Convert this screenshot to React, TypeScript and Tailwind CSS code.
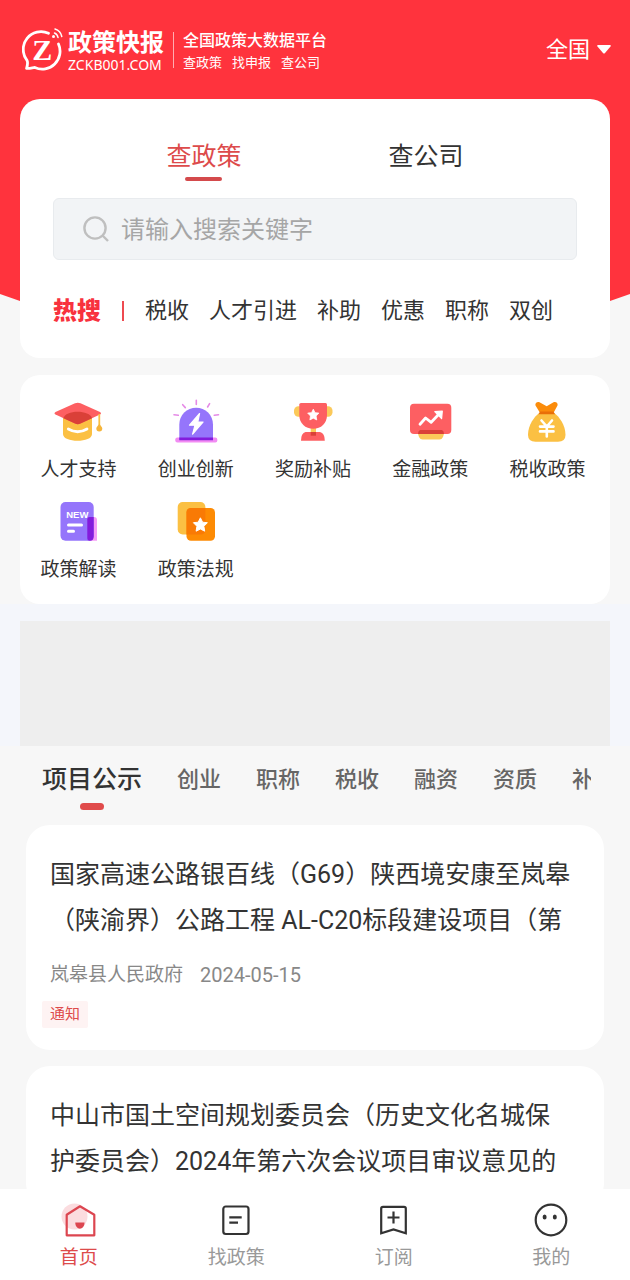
import { useState } from "react";
import type { ReactNode } from "react";

const STAR =
  "M0 -7 L2.2 -2.6 L7 -2.1 L3.5 1.5 L4.3 6.4 L0 4.2 L-4.3 6.4 L-3.5 1.5 L-7 -2.1 L-2.2 -2.6 Z";

function ServiceIcon({ children }: { children: ReactNode }) {
  return (
    <svg viewBox="0 0 50 44" className="h-11 w-[50px]" fill="none" aria-hidden="true">
      {children}
    </svg>
  );
}

const services: { label: string; icon: ReactNode }[] = [
  {
    label: "人才支持",
    icon: (
      <ServiceIcon>
        <path d="M9 16H38V35C38 39.5 31 41.8 23.5 41.8S9 39.5 9 35Z" fill="#fbc043" />
        <path d="M1.5 13 21 4.3Q23.7 3.2 26.5 4.3L46 13Q48 14.3 46 15.6L26.5 24.6Q23.7 25.8 21 24.6L1.5 15.6Q-.5 14.3 1.5 13Z" fill="#fd5f62" />
        <path d="M9.5 19.2C11 10.5 36 10.5 38 19.2L26.5 24.6Q23.7 25.8 21 24.6Z" fill="#da4038" />
        <path d="M45.3 15V28" stroke="#fbc043" strokeWidth="1.8" />
        <path d="M45.3 25c1.5 1.8 3 3.2 3 4.6a3 3 0 0 1-6 0c0-1.4 1.5-2.8 3-4.6Z" fill="#f5b53b" />
        <path d="M14.3 30Q23.7 35.5 33 30" stroke="#fff" strokeWidth="2.8" strokeLinecap="round" />
      </ServiceIcon>
    ),
  },
  {
    label: "创业创新",
    icon: (
      <ServiceIcon>
        <path d="M3 15.8 7.3 16.3M11.7 5.7 14.3 8.6M25.3 1.3V5.5M38.6 4.6 36.6 8M43.3 16.3 47.5 15.8" stroke="#e58ae6" strokeWidth="1.6" strokeLinecap="round" />
        <rect x="4.3" y="38.5" width="42" height="5" rx="2" fill="#f28cf3" />
        <path d="M8.3 40.8V25.5a16.85 16.85 0 0 1 33.7 0V40.8Z" fill="#9575fb" />
        <path d="M8.3 38.5H42V41.3H8.3Z" fill="#831bdc" />
        <path d="M28.6 14.5 18.5 26.2H24L21.6 35.2 32 23H26.8Z" fill="#fff" stroke="#fff" strokeWidth="1.2" strokeLinejoin="round" />
      </ServiceIcon>
    ),
  },
  {
    label: "奖励补贴",
    icon: (
      <ServiceIcon>
        <rect x="6" y="7.3" width="38.5" height="10.5" rx="4.5" fill="#fbc95a" />
        <path d="M22.7 29H28V36H22.7Z" fill="#fbc95a" />
        <path d="M13 4H37.5Q39 4 39 5.5V16C39 24.5 33 29.8 25.2 29.8S11.3 24.5 11.3 16V5.5Q11.3 4 13 4Z" fill="#fd5f62" />
        <path d="M17.5 33H32Q36.8 34 36.8 41.8H13Q13 34 17.5 33Z" fill="#fd5f62" />
        <path d="M22.7 33H28V36.7H22.7Z" fill="#da4038" />
        <path d={STAR} transform="translate(25.3 15.8) scale(.8)" fill="#fff" stroke="#fff" strokeLinejoin="round" />
      </ServiceIcon>
    ),
  },
  {
    label: "金融政策",
    icon: (
      <ServiceIcon>
        <path d="M12.7 31H39.3Q39 40.5 34.5 40.5H17.5Q13 40.5 12.7 31Z" fill="#fbc95a" />
        <rect x="5" y="4.7" width="41.3" height="30.3" rx="4" fill="#fd5f62" />
        <path d="M15 31H37Q39 32 39 35H13Q13 32 15 31Z" fill="#da4038" />
        <path d="M15 25.3 20.6 19 26.2 23.3 34 15" stroke="#fff" strokeWidth="2.8" strokeLinecap="round" strokeLinejoin="round" />
        <path d="M29.8 12.6 37.3 12 36.6 19.6Z" fill="#fff" stroke="#fff" strokeWidth="1.2" strokeLinejoin="round" />
      </ServiceIcon>
    ),
  },
  {
    label: "税收政策",
    icon: (
      <ServiceIcon>
        <path d="M17 14.3H32.5C37 17.5 43.5 26 43.5 36Q43.5 42.7 36 42.7H13.5Q6 42.7 6 36C6 26 12.500 17.5 17 14.3Z" fill="#fbc043" />
        <path d="M17.800 13.5 13.5 6.5C12.8 4.5 15 2.5 17.5 3.3L24.7 7.2 31.5 3.2C34 2.3 36.3 4.3 35.5 6.5L31.7 13.5Z" fill="#fb8c0b" />
        <path d="M18 12.5H31.5L33 15.3H16.5Z" fill="#e96f08" />
        <path d="M19.5 21.5 24.8 27.5 30 21.5M24.8 27.5V37.5M18 27.6H31.5M18 32.4H31.5" stroke="#fff" strokeWidth="2.6" strokeLinecap="round" />
      </ServiceIcon>
    ),
  },
  {
    label: "政策解读",
    icon: (
      <ServiceIcon>
        <path d="M33.3 18H40Q43 18 43 21V41.7H33.3Z" fill="#f59cf6" />
        <rect x="6.500" y="3" width="33.2" height="38.7" rx="5" fill="#9575fb" />
        <path d="M35.5 18H39.7V37.5Q39.7 41.7 36 41.7 33.3 41.7 33.3 39V20Q33.3 18 35.5 18Z" fill="#831bdc" />
        <text x="23.3" y="19.3" textAnchor="middle" fontFamily="Liberation Sans, sans-serif" fontSize="9.5" fontWeight="700" fill="#fff">NEW</text>
        <path d="M14.5 26H27.5M14.5 32.3H19.5" stroke="#fff" strokeWidth="3" strokeLinecap="round" />
      </ServiceIcon>
    ),
  },
  {
    label: "政策法规",
    icon: (
      <ServiceIcon>
        <rect x="6.7" y="3" width="27.7" height="32.5" rx="5" fill="#fbc043" />
        <rect x="15.5" y="9" width="28.5" height="32.7" rx="4.5" fill="#fd8b04" />
        <path d="M20 9H34.4V30.5Q34.4 35.5 29.4 35.5H15.5V13.5Q15.5 9 20 9Z" fill="#f97a05" />
        <path d={STAR} transform="translate(29.4 25.8)" fill="#fff" stroke="#fff" strokeLinejoin="round" />
      </ServiceIcon>
    ),
  },
];

function NavIcon({ children }: { children: ReactNode }) {
  return (
    <svg viewBox="0 0 36 36" className="size-9" fill="none" stroke="currentColor" strokeWidth="2.2" aria-hidden="true">
      {children}
    </svg>
  );
}

const navItems: { label: string; icon: ReactNode }[] = [
  {
    label: "首页",
    icon: (
      <NavIcon>
        <circle cx="13.5" cy="14.5" r="13" fill="#fbdcdf" stroke="none" />
        <path d="M19 4.3 33.3 12.8V33.3H5.7V12.8Z" strokeLinejoin="round" />
        <path d="M14.3 20.6H23.5C23.5 28.7 14.3 28.7 14.3 20.6Z" fill="currentColor" stroke="none" />
      </NavIcon>
    ),
  },
  {
    label: "找政策",
    icon: (
      <NavIcon>
        <rect x="5.3" y="4.5" width="25.2" height="27.5" rx="2.5" />
        <path d="M11.3 15.3H23.7M11.3 20.6H20" />
      </NavIcon>
    ),
  },
  {
    label: "订阅",
    icon: (
      <NavIcon>
        <path d="M5.2 31.2V6.5Q5.2 4.8 7 4.8H28Q29.8 4.8 29.8 6.5V31.2L17.5 27.5Z" />
        <path d="M17.5 9.5V21.5M11.5 15.5H23.5" />
      </NavIcon>
    ),
  },
  {
    label: "我的",
    icon: (
      <NavIcon>
        <circle cx="18" cy="18" r="15.3" />
        <ellipse cx="11.6" cy="15" rx="2" ry="2.5" fill="currentColor" stroke="none" />
        <ellipse cx="21.8" cy="15" rx="2" ry="2.5" fill="currentColor" stroke="none" />
      </NavIcon>
    ),
  },
];

const hotWords = ["税收", "人才引进", "补助", "优惠", "职称", "双创"];
const categories = ["项目公示", "创业", "职称", "税收", "融资", "资质", "补助"];

interface Article {
  lines: string[];
  source?: string;
  date?: string;
  tag?: string;
}

const articles: Article[] = [
  {
    lines: ["国家高速公路银百线（G69）陕西境安康至岚皋", "（陕渝界）公路工程 AL-C20标段建设项目（第"],
    source: "岚皋县人民政府",
    date: "2024-05-15",
    tag: "通知",
  },
  {
    lines: ["中山市国土空间规划委员会（历史文化名城保", "护委员会）2024年第六次会议项目审议意见的"],
  },
];

function Brand() {
  return (
    <div className="flex items-center">
      <svg viewBox="0 0 42 44" className="h-11 w-[42px]" fill="none" stroke="#fff" aria-hidden="true">
        <path d="M26.5 5.2A17.8 17.8 0 0 0 5 32.3C6 34.3 5.6 37 4.6 40.3 8 40.6 10.5 39.6 12.8 39.4A17.8 17.8 0 0 0 36.5 16" strokeWidth="2.8" strokeLinecap="round" strokeLinejoin="round" />
        <path d="M32.5 5A6 6 0 0 1 36 9.5M33 1A10 10 0 0 1 39.8 8.5" strokeWidth="1.5" strokeLinecap="round" />
        <circle cx="31.5" cy="8.5" r="1.5" fill="#fff" stroke="none" />
        <text x="20.3" y="32.3" textAnchor="middle" fontFamily="Liberation Serif, serif" fontSize="30" fontWeight="700" fill="#fff" stroke="none">Z</text>
      </svg>
      <div className="ml-1 flex flex-col pt-0.5">
        <span className="text-[24px] leading-7 font-bold">政策快报</span>
        <span className="font-['Noto_Sans'] text-[14px] leading-4">ZCKB001.COM</span>
      </div>
      <div className="mx-[9px] h-9 w-px bg-white/60" />
      <div className="flex flex-col pt-0.5">
        <span className="text-[16px] leading-6 font-medium">全国政策大数据平台</span>
        <span className="flex gap-[10px] text-[13px] leading-5">
          <span>查政策</span>
          <span>找申报</span>
          <span>查公司</span>
        </span>
      </div>
    </div>
  );
}

export default function App() {
  const [mode, setMode] = useState("查政策");
  const [category, setCategory] = useState("项目公示");
  const [page, setPage] = useState("首页");

  return (
    <div className="flex h-screen flex-col bg-[#f7f7f7] font-[Roboto,'Noto_Sans_CJK_SC',sans-serif] text-[#333]">
      <main className="relative isolate min-h-0 flex-1 overflow-y-auto [scrollbar-width:none]">
        <div className="absolute inset-x-0 top-0 -z-10 h-[308px] bg-[#ff333d] [clip-path:polygon(0_0,100%_0,100%_294px,calc(100%-40px)_308px,40px_308px,0_294px)]" />

        <header className="flex h-[99px] items-center justify-between pr-[19px] pl-[22px] text-white">
          <Brand />
          <button type="button" className="flex items-center gap-[7px] text-[22px] leading-8">
            全国
            <svg viewBox="0 0 14 9" className="h-[9px] w-[14px]" fill="#fff" aria-hidden="true">
              <path d="M1 0H13Q14.3.3 13.5 1.5L8 8Q7 9 6 8L.5 1.5Q-.3.3 1 0Z" />
            </svg>
          </button>
        </header>

        <section className="mx-5 rounded-[20px] bg-white px-[33px] pt-10 pb-8">
          <div className="flex justify-center gap-[147px]">
            {["查政策", "查公司"].map((name) => (
              <button
                key={name}
                type="button"
                onClick={() => setMode(name)}
                className={`flex flex-col items-center gap-0.5 text-[25px] leading-9 ${mode === name ? "text-[#dd4b4b]" : "text-[#333]"}`}
              >
                {name}
                <span className={`h-1 w-[37px] rounded-full ${mode === name ? "bg-[#d44a4c]" : "bg-transparent"}`} />
              </button>
            ))}
          </div>

          <label className="mt-[17px] flex h-[62px] items-center gap-3 rounded-md border border-[#e8ebee] bg-[#f2f4f6] pr-4 pl-[29px]">
            <svg viewBox="0 0 26 26" className="size-[26px] shrink-0" fill="none" stroke="#bfbfbf" strokeWidth="2.4" aria-hidden="true">
              <circle cx="12" cy="12" r="10.6" />
              <path d="M19.5 19.5 25 25" />
            </svg>
            <input
              type="text"
              aria-label="搜索关键字"
              placeholder="请输入搜索关键字"
              className="w-full min-w-0 bg-transparent pt-0.5 text-[24px] leading-8 outline-none placeholder:text-[#a6a6a6]"
            />
          </label>

          <div className="mt-9 flex items-center leading-[30px] whitespace-nowrap">
            <span className="text-[24px] font-black text-[#f8323e] [font-style:oblique_8deg]">热搜</span>
            <span className="mx-[21px] h-5 w-0.5 bg-[#ee4a50]" />
            <div className="flex gap-5 text-[22px]">
              {hotWords.map((word) => (
                <a key={word} href="#search">{word}</a>
              ))}
            </div>
          </div>
        </section>

        <section className="mx-5 mt-[17px] grid grid-cols-5 gap-y-[17px] rounded-[20px] bg-white pt-6 pr-1 pb-[22px]">
          {services.map(({ label, icon }) => (
            <a key={label} href="#service" className="flex flex-col items-center gap-[15px] text-[19px] leading-6 whitespace-nowrap">
              {icon}
              {label}
            </a>
          ))}
        </section>

        <section className="bg-[#f4f6fb] px-5 pt-[17px]">
          <div className="h-[125px] bg-[#eee]" />
        </section>

        <div className="mr-[39px] ml-[42px] flex gap-[35px] overflow-hidden pt-4 pb-[15px] whitespace-nowrap">
          {categories.map((name) => (
            <button
              key={name}
              type="button"
              onClick={() => setCategory(name)}
              className={`flex shrink-0 flex-col items-center gap-[5px] leading-9 font-medium ${category === name ? "text-[25px] text-[#333]" : "text-[22px] text-[#666]"}`}
            >
              {name}
              <span className={`h-[7px] w-6 rounded-full ${category === name ? "bg-[#e04b4b]" : "bg-transparent"}`} />
            </button>
          ))}
        </div>

        <div className="mx-[26px] flex flex-col gap-4">
          {articles.map(({ lines, source, date, tag }) => (
            <article key={lines[0]} className="overflow-hidden rounded-3xl bg-white px-6 pt-[27px] pb-[22px]">
              <h2 className="text-[25px] leading-[46px] whitespace-nowrap">
                {lines.map((line) => (
                  <span key={line} className="block">{line}</span>
                ))}
              </h2>
              {source && (
                <p className="mt-[19px] flex gap-[17px] text-[19px] leading-6 text-[#888]">
                  <span>{source}</span>
                  <time className="text-[20px]">{date}</time>
                </p>
              )}
              {tag && (
                <div className="mt-[14px] -ml-2 flex">
                  <span className="rounded-xs bg-[#fef3f3] px-2 text-[15px] leading-[27px] text-[#dd4b4b]">{tag}</span>
                </div>
              )}
            </article>
          ))}
        </div>
      </main>

      <nav className="grid grid-cols-4 bg-white pt-[13px] pb-[10px]">
        {navItems.map(({ label, icon }) => (
          <button
            key={label}
            type="button"
            onClick={() => setPage(label)}
            className={`flex flex-col items-center gap-2 text-[19px] leading-6 ${page === label ? "text-[#dc4650]" : "text-[#333]"}`}
          >
            {icon}
            <span className={page === label ? "text-[#dd4b4b]" : "text-[#999]"}>{label}</span>
          </button>
        ))}
      </nav>
    </div>
  );
}
